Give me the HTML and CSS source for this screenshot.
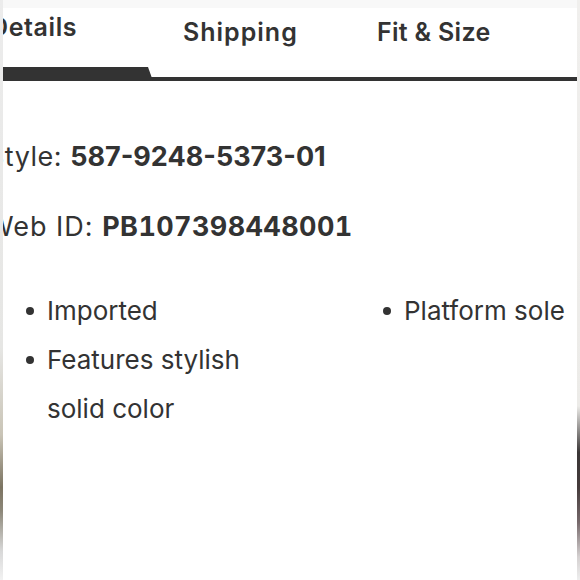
FILE: index.html
```html
<!DOCTYPE html>
<html>
<head>
<meta charset="utf-8">
<link rel="stylesheet" href="styles.css">
</head>
<body>
<div class="frame">
  <div class="edge edge-left"></div>
  <div class="screen">
    <nav class="tabs">
      <div class="tab tab-active"><span class="tab-label label-details">Details</span></div>
      <div class="tab tab-shipping"><span class="tab-label">Shipping</span></div>
      <div class="tab tab-fit"><span class="tab-label">Fit &amp; Size</span></div>
    </nav>
    <section class="content">
      <p class="meta">Style: <strong>587-9248-5373-01</strong></p>
      <p class="meta meta-id">Web ID: <strong>PB107398448001</strong></p>
      <div class="features">
        <ul class="list list-left">
          <li>Imported</li>
          <li>Features stylish solid color</li>
        </ul>
        <ul class="list list-right">
          <li>Platform sole</li>
        </ul>
      </div>
    </section>
  </div>
  <div class="edge edge-right"></div>
</div>
</body>
</html>
```

FILE: styles.css
```css
html, body {
  margin: 0;
  padding: 0;
  background: #ffffff;
}

body {
  font-family: Inter, Lato, "Liberation Sans", sans-serif;
  color: #333333;
}

.frame {
  display: flex;
  width: 580px;
  height: 580px;
  overflow: hidden;
}

.edge {
  width: 3px;
  flex: none;
}

.edge-left {
  background: linear-gradient(to bottom, #ececec 0%, #e6e6e4 60%, #c9c4b6 75%, #7c7462 84%, #8c8778 88%, #d8d8d8 95%, #f2f2f2 100%);
}

.edge-right {
  background: linear-gradient(to bottom, #f0efed 0%, #ecebe8 70%, #3a3636 78%, #453b3b 84%, #75686a 90%, #d4d0d0 96%, #eeeeee 100%);
}

.screen {
  flex: 1;
  overflow: hidden;
  background: #ffffff;
  box-shadow: inset 0 8px 0 #f8f8f8;
}

.tabs {
  display: flex;
  height: 81px;
  box-sizing: border-box;
  border-bottom: 4px solid #333333;
}

.tab {
  flex: none;
  font-size: 25px;
  font-weight: 600;
  letter-spacing: 0.3px;
  line-height: 30px;
  padding-top: 17px;
  white-space: nowrap;
}

.tab-active {
  position: relative;
  width: 147px;
  padding-top: 12px;
}

.tab-active::after {
  content: "";
  position: absolute;
  left: 0;
  bottom: -4px;
  width: 150px;
  height: 14px;
  background: #333333;
  clip-path: polygon(0 0, 145px 0, 150px 100%, 0 100%);
}

.label-details {
  display: inline-block;
  margin-left: -13px;
  letter-spacing: 0.6px;
}

.tab-shipping {
  margin-left: 33px;
  width: 194px;
  letter-spacing: 1px;
}

.content {
  margin-left: -16px;
  padding-top: 41px;
}

.meta {
  margin: 0;
  font-size: 27px;
  line-height: 70px;
  letter-spacing: 0.5px;
  white-space: nowrap;
}

.meta strong {
  font-weight: 700;
  letter-spacing: 0;
}

.meta-id {
  letter-spacing: 1px;
}

.meta-id strong {
  letter-spacing: 0.4px;
  font-variant-numeric: tabular-nums;
}

.features {
  display: flex;
  margin-top: 24px;
}

.list {
  margin: 0;
  padding: 0;
  list-style: none;
  font-size: 26px;
  line-height: 49px;
}

.list li {
  position: relative;
}

.list li::before {
  content: "";
  position: absolute;
  left: -21px;
  top: 21px;
  width: 8px;
  height: 8px;
  border-radius: 50%;
  background: #333333;
}

.list-left {
  margin-left: 60px;
  width: 210px;
}

.list-right {
  margin-left: 147px;
}
```
